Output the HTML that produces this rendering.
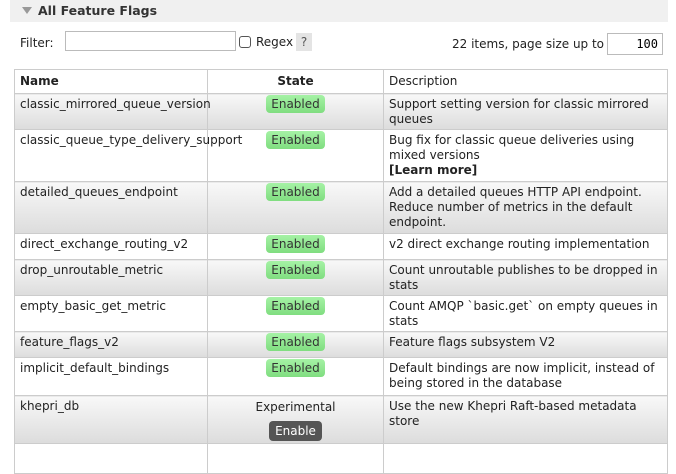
<!DOCTYPE html>
<html><head><style>
body{margin:0;width:676px;height:448px;overflow:hidden;background:#fff;font-family:"DejaVu Sans","Liberation Sans",sans-serif;font-size:12px;color:#222}
.hdr{position:absolute;left:10px;top:0;width:658px;height:22px;background:#f0f0f0;}
.hdr span{position:absolute;left:28px;top:3px;font-weight:bold;font-size:12.5px;color:#333}
.tri{position:absolute;left:12px;top:7px;width:0;height:0;border-left:5px solid transparent;border-right:5px solid transparent;border-top:7px solid #999}
input.t{position:absolute;border:1px solid #bbb;height:20px;box-sizing:border-box;background:#fff}
table{position:absolute;left:14px;top:69px;width:654px;border-collapse:collapse;table-layout:fixed}
td,th{border:1px solid #ccc;padding:3px 5px 2px 5px;vertical-align:top;line-height:15px;text-align:left}
th{background:#fff;padding:4px 5px}
tr.o td{background:linear-gradient(#f8f8f8,#dcdcdc)}
tr.e td{background:#fff}
td.s{text-align:center}
.en{background:linear-gradient(#a5f2a5,#80dd80);border-radius:4px;padding:2px 5px;color:#333}
.btn{display:inline-block;background:#555;color:#fff;border-radius:4px;padding:0 6px;line-height:20px;margin-top:6px}
</style></head><body>
<div class="hdr"><div class="tri"></div><span>All Feature Flags</span></div>
<span style="position:absolute;left:20px;top:36px">Filter:</span>
<input class="t" style="left:65px;top:31px;width:171px">
<span style="position:absolute;left:239px;top:36px;width:12px;height:12px;border:1px solid #555;border-radius:3px;box-sizing:border-box"></span>
<span style="position:absolute;left:256px;top:35px">Regex</span>
<span style="position:absolute;left:296px;top:33px;width:16px;height:18px;background:#e4e4e4;text-align:center;line-height:18px;color:#555">?</span>
<span style="position:absolute;left:452px;top:37px">22 items, page size up to</span>
<input class="t" style="left:607px;top:33px;width:56px;height:22px;text-align:right;font-family:'DejaVu Sans Mono',monospace;font-size:12px;padding-right:4px" value="100">
<table>
<col style="width:193px"><col style="width:176px"><col>
<tr style="height:24px"><th>Name</th><th style="text-align:center">State</th><th style="font-weight:normal">Description</th></tr>
<tr class="o" style="height:36px"><td>classic_mirrored_queue_version</td><td class="s"><span class="en">Enabled</span></td><td>Support setting version for classic mirrored queues</td></tr>
<tr class="e" style="height:52px"><td>classic_queue_type_delivery_support</td><td class="s"><span class="en">Enabled</span></td><td>Bug fix for classic queue deliveries using mixed versions<br><b>[Learn more]</b></td></tr>
<tr class="o" style="height:52px"><td>detailed_queues_endpoint</td><td class="s"><span class="en">Enabled</span></td><td>Add a detailed queues HTTP API endpoint. Reduce number of metrics in the default endpoint.</td></tr>
<tr class="e" style="height:26px"><td>direct_exchange_routing_v2</td><td class="s"><span class="en">Enabled</span></td><td>v2 direct exchange routing implementation</td></tr>
<tr class="o" style="height:36px"><td>drop_unroutable_metric</td><td class="s"><span class="en">Enabled</span></td><td>Count unroutable publishes to be dropped in stats</td></tr>
<tr class="e" style="height:36px"><td>empty_basic_get_metric</td><td class="s"><span class="en">Enabled</span></td><td>Count AMQP `basic.get` on empty queues in stats</td></tr>
<tr class="o" style="height:26px"><td>feature_flags_v2</td><td class="s"><span class="en">Enabled</span></td><td>Feature flags subsystem V2</td></tr>
<tr class="e" style="height:38px"><td>implicit_default_bindings</td><td class="s"><span class="en">Enabled</span></td><td>Default bindings are now implicit, instead of being stored in the database</td></tr>
<tr class="o" style="height:46px"><td>khepri_db</td><td class="s" style="padding-top:4px">Experimental<br><span class="btn">Enable</span></td><td>Use the new Khepri Raft-based metadata store</td></tr>
<tr class="e" style="height:30px"><td></td><td></td><td></td></tr>
</table>
</body></html>
